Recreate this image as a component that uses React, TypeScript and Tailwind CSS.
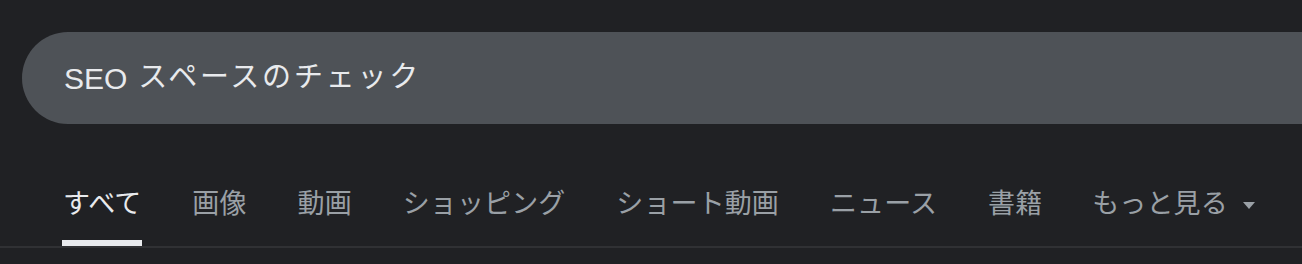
import React from "react";

const tabs = ["すべて", "画像", "動画", "ショッピング", "ショート動画", "ニュース", "書籍"];

export default function App() {
  return (
    <div
      className="w-[1302px] h-[264px] bg-[#202124] overflow-hidden"
      style={{ fontFamily: '"Liberation Sans", "Noto Sans CJK JP", sans-serif' }}
    >
      <div className="pt-[32px] pl-[22px]">
        <div className="h-[92px] w-[1400px] rounded-l-full bg-[#4e5257] flex items-center pl-[42px] text-[#e8eaed] whitespace-nowrap">
          <span className="text-[30px]">SEO</span>
          <span className="ml-[11px] text-[29px] tracking-[2.8px]">スペースのチェック</span>
        </div>
      </div>
      <div className="mt-[67px] border-b-2 border-[#303134] pl-[62px] flex gap-[49px]">
        {tabs.map((t, i) => (
          <div key={t} className="flex flex-col">
            <div
              className={`text-[27px] leading-[27px] px-[1px] tracking-[0.1px] whitespace-nowrap ${
                i === 0 ? "text-[#e8eaed]" : "text-[#9aa0a6]"
              }`}
            >
              {t}
            </div>
            <div className={`mt-[22px] h-[6px] ${i === 0 ? "bg-[#e8eaed]" : ""}`} />
          </div>
        ))}
        <div className="flex flex-col">
          <div className="flex items-center text-[27px] leading-[27px] tracking-[0.1px] text-[#9aa0a6] whitespace-nowrap">
            もっと見る
            <svg width="12" height="7" viewBox="0 0 12 7" className="ml-[15px] mt-[2px]">
              <path d="M0 0 L12 0 L6 7 Z" fill="#9aa0a6" />
            </svg>
          </div>
          <div className="mt-[22px] h-[6px]" />
        </div>
      </div>
    </div>
  );
}
